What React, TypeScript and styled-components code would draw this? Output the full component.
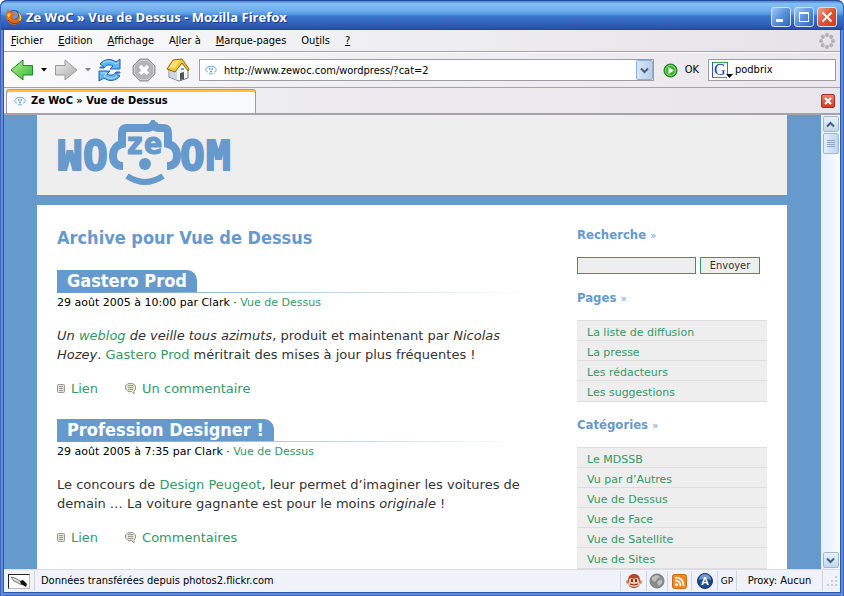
import React from "react";
import styled, { createGlobalStyle } from "styled-components";

const blue = "#6699cc";
const green = "#339966";
const uiFont = `"DejaVu Sans Condensed", "Noto Sans", sans-serif`;
const pageFont = `"DejaVu Sans", sans-serif`;

const Global = createGlobalStyle`
  * { box-sizing: border-box; }
  html, body { margin: 0; background: #fff; }
  button, input { font: inherit; margin: 0; padding: 0; color: inherit; }
  button { border: 0; background: none; display: flex; align-items: center; justify-content: center; }
  ul { list-style: none; margin: 0; padding: 0; }
  h1, h2, h3, p { margin: 0; }
  svg { display: block; flex: none; }
`;

const Window = styled.div`
  display: flex;
  flex-direction: column;
  height: 100vh;
  overflow: hidden;
  padding: 0 4px 4px;
  border-radius: 7px 7px 0 0;
  background: #2c54b0;
  box-shadow: inset 1px 0 #3f62b8, inset 3px 0 #5f8fdc, inset -1px 0 #3f62b8, inset -3px 0 #5f8fdc,
    inset 0 -1px #3f62b8, inset 0 -3px #5f8fdc;
  font: 11px/14px ${uiFont};
  color: #000;
`;

const TitleBar = styled.header`
  display: flex;
  align-items: center;
  gap: 4px;
  flex: none;
  height: 30px;
  margin: 0 -4px;
  padding: 3px 7px 0 6px;
  border-radius: 7px 7px 0 0;
  border-top: 1px solid #2a4b9a;
  background: linear-gradient(#4a86d8, #86c0f4 10%, #6cacec 35%, #5595e0 46%, #3c76cd 52%, #3263bd 75%, #2b52ac 93%, #23449a);
  box-shadow: inset 1px 0 #3a5fb5, inset -1px 0 #3a5fb5;
`;

const Title = styled.h1`
  flex: 1;
  font: bold 13px/18px "Open Sans", "Noto Sans", sans-serif;
  color: #fff;
  text-shadow: 1px 1px #1c3a86;
  white-space: nowrap;
`;

const WindowButtons = styled.div`
  display: flex;
  gap: 3px;
`;

const WindowButton = styled.button<{ $close?: boolean }>`
  width: 20px;
  height: 20px;
  border: 1px solid #cfe0fa;
  border-radius: 3px;
  background: ${(p) =>
    p.$close
      ? "linear-gradient(135deg, #f0a18c, #dc5334 50%, #c93d1c)"
      : "linear-gradient(135deg, #a5c8f4, #5a90dc 50%, #2f62b8)"};
`;

const MenuBar = styled.nav`
  display: flex;
  align-items: center;
  justify-content: space-between;
  flex: none;
  height: 22px;
  padding: 0 5px 0 7px;
  border-bottom: 1px solid #a5a3a8;
  background: linear-gradient(90deg, #fbfbfc, #f0eff2 40%, #e5e3e9);
`;

const MenuList = styled.ul`
  display: flex;
  gap: 15px;
`;

const MenuItem = styled.button`
  white-space: nowrap;
  display: block;
`;

const Toolbar = styled.div`
  display: flex;
  align-items: center;
  flex: none;
  height: 36px;
  padding: 0 4px 0 6px;
  border-top: 1px solid #fff;
  border-bottom: 1px solid #a5a3a8;
  background: linear-gradient(90deg, #fbfbfc, #f0eff2 40%, #eae8ed);
`;

const ToolButton = styled.button<{ $width: number; $after?: number }>`
  width: ${(p) => p.$width}px;
  height: 26px;
  margin-right: ${(p) => p.$after ?? 0}px;
`;

const AddressBox = styled.div`
  display: flex;
  align-items: center;
  flex: 1;
  height: 22px;
  border: 1px solid #9d9ca4;
  background: #fff;
  padding-left: 5px;
`;

const AddressInput = styled.input`
  flex: 1;
  min-width: 0;
  height: 18px;
  margin-left: 7px;
  border: 0;
  outline: 0;
  background: none;
`;

const DropButton = styled.button`
  width: 17px;
  height: 20px;
  border: 1px solid #8fb0d4;
  border-radius: 2px;
  background: linear-gradient(90deg, #d8e6f6, #b9cfe9);
`;

const GoButton = styled.button`
  gap: 7px;
  margin: 0 9px;
`;

const SearchBox = styled.div`
  display: flex;
  align-items: center;
  width: 128px;
  height: 22px;
  padding-left: 3px;
  border: 1px solid #9d9ca4;
  background: #fff;
`;

const SearchInput = styled.input`
  flex: 1;
  min-width: 0;
  margin-left: 2px;
  border: 0;
  outline: 0;
`;

const TabStrip = styled.div`
  display: flex;
  align-items: center;
  justify-content: space-between;
  flex: none;
  height: 27px;
  padding: 1px 5px 0 2px;
  border-bottom: 2px solid #a5a3a8;
  background: linear-gradient(90deg, #efeef1, #e8e6ec);
`;

const Tab = styled.button`
  justify-content: flex-start;
  gap: 5px;
  width: 250px;
  height: 24px;
  padding: 0 7px;
  border: solid #9d9ca4;
  border-width: 0 1px;
  border-radius: 3px 3px 0 0;
  background: #f8fafe;
  box-shadow: inset 0 1px #e8951e, inset 0 3px #ffc040;
  font-weight: bold;
  color: #000;
`;

const CloseTab = styled.button`
  width: 14px;
  height: 14px;
  border: 1px solid #a82a20;
  border-radius: 2px;
  background: linear-gradient(#ec8070, #d03a26);
`;

const Viewport = styled.div`
  display: flex;
  flex: 1;
  min-height: 0;
  background: ${blue};
`;

const Page = styled.div`
  flex: 1;
  min-width: 0;
  overflow: hidden;
  font-family: ${pageFont};
`;

const Sheet = styled.div`
  width: 100%;
  max-width: 750px;
  margin: 0 auto;
`;

const Masthead = styled.header`
  height: 80px;
  padding: 5px 20px;
  background: #eee;
`;

const Columns = styled.div`
  display: grid;
  grid-template-columns: minmax(0, 1fr) 190px;
  column-gap: 47px;
  margin-top: 10px;
  padding: 20px;
  background: #fff;
`;

const ArchiveTitle = styled.h2`
  margin-bottom: 19px;
  font: bold 18px/26px ${uiFont};
  color: ${blue};
`;

const Entry = styled.article`
  margin-bottom: 21px;
`;

const EntryHead = styled.div`
  padding-bottom: 1px;
  background: linear-gradient(90deg, ${blue}, #fff) bottom / 100% 1px no-repeat;
`;

const EntryTitle = styled.h3`
  width: fit-content;
  padding: 0 10px;
  border-radius: 0 10px 0 0;
  background: ${blue};
  font: bold 18px/22px ${uiFont};
  color: #fff;
`;

const Meta = styled.p`
  padding-top: 2px;
  font-size: 11px;
  line-height: 15px;
  color: #000;
`;

const Link = styled.a`
  color: ${green};
  text-decoration: none;
`;

const Body = styled.p`
  margin: 16px 0 15px;
  font-size: 13px;
  line-height: 19px;
  color: #333;
`;

const EntryLinks = styled.div`
  display: flex;
  gap: 27px;
  font-size: 13px;
  line-height: 19px;
`;

const IconLink = styled(Link)`
  display: flex;
  align-items: center;
  gap: 5px;
`;

const SideTitle = styled.h3`
  margin-bottom: 12px;
  font: bold 13px/20px ${uiFont};
  color: ${blue};
`;

const Raquo = styled.span`
  font-size: 11px;
  line-height: 1;
  font-weight: normal;
`;

const SearchForm = styled.form`
  display: flex;
  gap: 4px;
  margin-bottom: 14px;
`;

const SiteInput = styled.input`
  width: 119px;
  height: 17px;
  border: 1px solid ${green};
  background: #eee;
`;

const SubmitButton = styled.button`
  width: 60px;
  height: 17px;
  border: 1px solid ${green};
  background: #eee;
  font: 11px/14px ${uiFont};
  color: #333;
`;

const SideList = styled.ul`
  margin-bottom: 13px;
  padding-bottom: 1px;
  border-bottom: 1px solid #ddd;
  background: #eee;
`;

const SideItem = styled.li`
  padding: 5px 10px 0;
  border-top: 1px solid #ddd;
  font-size: 11px;
  line-height: 14px;
`;

const ScrollBar = styled.div`
  display: flex;
  flex-direction: column;
  align-items: center;
  width: 20px;
  padding: 1px 0;
  border-left: 1px solid ${blue};
  background: linear-gradient(90deg, #e4eefc, #fafcff);
`;

const ScrollButton = styled.button`
  width: 16px;
  height: 16px;
  border: 1px solid #9db8d8;
  border-radius: 2px;
  background: linear-gradient(#e8f1fb, #c3d6ec);
`;

const ScrollThumb = styled(ScrollButton)`
  height: 21px;
  margin: 1px 0 auto;
  background: linear-gradient(90deg, #e4effb, #bfd4ee);
`;

const StatusBar = styled.footer`
  display: flex;
  align-items: center;
  flex: none;
  height: 23px;
  padding-left: 4px;
  border-top: 1px solid #dcdde2;
  background: #eff3f9;
`;

const StatusText = styled.div`
  flex: 1;
  height: 20px;
  padding-left: 6px;
  border-left: 1px solid #d2d4da;
  line-height: 19px;
  white-space: nowrap;
`;

const StatusCell = styled.div<{ $width: number }>`
  display: flex;
  align-items: center;
  justify-content: center;
  width: ${(p) => p.$width}px;
  height: 20px;
  border-left: 1px solid #d2d4da;
  white-space: nowrap;
`;

const EditorBox = styled.div`
  display: flex;
  align-items: center;
  justify-content: center;
  width: 22px;
  height: 15px;
  margin-right: 4px;
  border: 1px solid;
  border-color: #222 #bbb #bbb #222;
  background: #fff;
`;

const Abbreviation = styled.span`
  font: 9px/12px "DejaVu Sans", sans-serif;
`;

const FirefoxIcon = () => (
  <svg width="16" height="16" viewBox="0 0 16 16" aria-hidden="true">
    <circle cx="8" cy="8" r="7" fill="#2b4f9e" />
    <circle cx="8" cy="6" r="4" fill="#5f9be0" />
    <path d="M1 3C1 1 2 0 3 1L5 3C8 3 9 4 9 6L7 7C7 10 9 11 11 10C13 9 13 6 12 3C15 5 16 8 15 11C13 15 9 17 5 15C1 13 0 9 0 7Z" fill="#e06c1a" />
    <path d="M12 3C15 5 16 8 15 11L13 12C14 8 14 6 12 3ZM1 6L3 4L5 5L3 8L4 11Z" fill="#ffc838" />
    <path d="M2 11C5 15 11 16 14 12" fill="none" stroke="#8c3212" />
  </svg>
);

const FaceIcon = () => (
  <svg width="12" height="10" viewBox="0 0 12 10" aria-hidden="true">
    <g fill="none" stroke="#7fa9d3">
      <path d="M3 7C0 7 0 2.5 3 2.5L3 1.5H9V2.5C12 2.5 12 7 9 7" />
      <path d="M4 8.5Q6 9.5 8 8.5" />
      <path d="M4 4H5.5M6.5 4H8" strokeWidth="2" />
    </g>
    <circle cx="6" cy="6.5" r="1" fill={blue} />
  </svg>
);

const ArrowIcon = ({ back }: { back?: boolean }) => (
  <svg width="24" height="24" viewBox="0 0 24 24" aria-hidden="true">
    <defs>
      <linearGradient id={back ? "arrowBack" : "arrowNext"} x1="0" y1="0" x2="1" y2="1">
        <stop offset="0" stopColor={back ? "#b9f29a" : "#eeeeee"} />
        <stop offset="1" stopColor={back ? "#2cb52c" : "#aaaaaa"} />
      </linearGradient>
    </defs>
    <path
      d={back ? "M1 12L13 2V7.5H22.5V17H13V22Z" : "M23 12L11 2V7.5H1.5V17H11V22Z"}
      fill={`url(#${back ? "arrowBack" : "arrowNext"})`}
      stroke={back ? "#1d8a24" : "#999"}
      strokeLinejoin="round"
    />
  </svg>
);

const Caret = ({ color }: { color: string }) => (
  <svg width="6" height="4" viewBox="0 0 6 4" aria-hidden="true">
    <path d="M0 0H6L3 3.5Z" fill={color} />
  </svg>
);

const ReloadIcon = () => (
  <svg width="24" height="24" viewBox="0 0 24 24" aria-hidden="true">
    <g fill="#5fb4f2" stroke="#1c62b8" strokeLinejoin="round">
      <path d="M2 9L6 9L2 6C6 1 13 0 18 4L22 1V11H12L15 8C11 6 8 7 6 10H2Z" />
      <path d="M22 15L18 15L22 18C18 23 11 24 6 20L1 23V13H12L9 16C13 18 16 17 18 14H22Z" />
    </g>
    <path d="M5 5C9 2 13 3 18 6L21 4M3 15H9L6 18C10 21 16 21 19 18" fill="none" stroke="#b7e2fd" />
  </svg>
);

const StopIcon = () => (
  <svg width="24" height="24" viewBox="0 0 24 24" aria-hidden="true">
    <path d="M8 1H16L23 8V16L16 23H8L1 16V8Z" fill="#b4b4b4" stroke="#909090" />
    <path d="M8 2.5H16L21.5 8V16L16 21.5H8L2.5 16V8Z" fill="none" stroke="#d0d0d0" />
    <path d="M8 8L16 16M16 8L8 16" stroke="#fff" strokeWidth="3.5" />
  </svg>
);

const HomeIcon = () => (
  <svg width="24" height="24" viewBox="0 0 24 24" aria-hidden="true">
    <path d="M3 12L8 14L16 5L22 12V20L13 23L3 19Z" fill="#f6f6f4" stroke="#75787e" />
    <path d="M3.5 12L11 13V22L3.5 19Z" fill="#cdd6e4" />
    <path d="M7 2L16 1L23 11L22 13L16 5L9 14L1 11Z" fill="#f3c63c" stroke="#8a6818" strokeLinejoin="round" />
    <path d="M7 3L14 2L9 10L3 10Z" fill="#fbdf74" />
    <path d="M14 15L18 14V21L14 22Z" fill="#50545c" />
    <path d="M15 10H18V12H15Z" fill="#58a8e4" />
  </svg>
);

const GoIcon = () => (
  <svg width="15" height="15" viewBox="0 0 15 15" aria-hidden="true">
    <circle cx="7.5" cy="7.5" r="6.5" fill="#39b32c" stroke="#14741a" />
    <circle cx="7.5" cy="7.5" r="5" fill="none" stroke="#8fe07c" />
    <path d="M5.5 4L11 7.5L5.5 11Z" fill="#fff" />
  </svg>
);

const GoogleIcon = () => (
  <svg width="21" height="17" viewBox="0 0 21 17" aria-hidden="true">
    <path d="M1 .5H15" stroke="#2fae3b" />
    <path d="M.5 0V16" stroke="#2b55c9" />
    <path d="M0 15.5H15" stroke="#2fae3b" />
    <path d="M15.5 0V12" stroke="#d83a2e" />
    <text x="2" y="13" fontFamily="Liberation Serif, serif" fontSize="16" fill="#1736b0">G</text>
    <path d="M14 12H21L17.5 16Z" fill="#000" />
  </svg>
);

const Throbber = () => (
  <svg width="16" height="16" viewBox="0 0 16 16" aria-hidden="true">
    <g fill="#b3b1b5">
      {[0, 45, 90, 135, 180, 225, 270, 315].map((a) => (
        <circle key={a} cx="8" cy="2" r="2" transform={`rotate(${a} 8 8)`} />
      ))}
    </g>
  </svg>
);

const Chevron = ({ up }: { up?: boolean }) => (
  <svg width="9" height="7" viewBox="0 0 9 7" aria-hidden="true">
    <path d={up ? "M1 5.5L4.5 2L8 5.5" : "M1 1.5L4.5 5L8 1.5"} fill="none" stroke="#4a5f80" strokeWidth="2" />
  </svg>
);

const CrossIcon = ({ size, weight }: { size: number; weight: number }) => (
  <svg width={size} height={size} viewBox="0 0 12 12" aria-hidden="true">
    <path d="M1.5 1.5L10.5 10.5M10.5 1.5L1.5 10.5" stroke="#fff" strokeWidth={weight} />
  </svg>
);

const SiteLogo = () => (
  <svg width="176" height="68" viewBox="0 0 176 68" role="img" aria-label="WoC ze doM">
    <g fill={blue} stroke={blue} strokeWidth="2" fontWeight="bold" fontFamily="DejaVu Sans Mono, monospace" fontSize="41">
      <text x="1" y="50" transform="rotate(180 13 35)">M</text>
      <text x="26" y="50">O</text>
      <text x="123" y="50">O</text>
      <text x="149" y="50">M</text>
    </g>
    <path
      d="M66 46C59 46 56 42 56 36C56 29 60 25 65 24V13Q65 8 70 8H90Q94 8 96 5Q98 8 102 8H106Q111 8 111 13V24C116 25 120 29 120 36C120 42 117 46 110 46"
      fill="none"
      stroke={blue}
      strokeWidth="8"
    />
    <path d="M92 5L94 2H100L102 5Z" fill={blue} />
    <g fill={blue} stroke={blue} fontWeight="bold" fontFamily="DejaVu Sans Condensed, sans-serif" fontSize="30">
      <text x="70" y="34">z</text>
      <text x="87" y="34">e</text>
    </g>
    <circle cx="88" cy="44" r="6" fill={blue} />
    <path d="M70 56Q88 68 106 56" fill="none" stroke={blue} strokeWidth="6" />
  </svg>
);

const PageIcon = () => (
  <svg width="9" height="10" viewBox="0 0 9 10" aria-hidden="true">
    <rect x=".5" y=".5" width="7" height="8" rx="1" fill="#e6e6d0" stroke="#999" />
    <path d="M2 2.5H6M2 4.5H6M2 6.5H6" stroke="#999" />
  </svg>
);

const CommentIcon = () => (
  <svg width="12" height="12" viewBox="0 0 12 12" aria-hidden="true">
    <path d="M3 .5H8L10.5 3V6L9 8.5V11L6.5 8.5H3L.5 6V3Z" fill="#e6e6d0" stroke="#999" />
    <path d="M3 2.5H8M3 4.5H8M3 6.5H8" stroke="#999" />
  </svg>
);

const PenIcon = () => (
  <svg width="20" height="13" viewBox="0 0 20 13" aria-hidden="true">
    <path d="M2 2L6 3L14 8L13 10L5 6Z" fill="#ddd" stroke="#777" />
    <path d="M11 6L14 5L18 9L17 12L12 9Z" fill="#111" />
  </svg>
);

const MonkeyIcon = () => (
  <svg width="16" height="16" viewBox="0 0 16 16" aria-hidden="true">
    <circle cx="2" cy="9" r="2" fill="#d9845f" />
    <circle cx="14" cy="9" r="2" fill="#d9845f" />
    <path d="M2 8C2 3 4 1 8 1C12 1 14 3 14 8C14 13 12 15 8 15C4 15 2 13 2 8Z" fill="#b04a2c" />
    <path d="M3 8C3 5 5 4 8 6C11 4 13 5 13 8L14 11C12 15 4 15 2 11Z" fill="#f5c3a6" />
    <path d="M6 6V9M10 6V9" fill="none" stroke="#3a1410" strokeWidth="1.5" />
    <path d="M4 11Q8 13 12 11" fill="none" stroke="#7a1f14" />
  </svg>
);

const GlobeIcon = () => (
  <svg width="16" height="16" viewBox="0 0 16 16" aria-hidden="true">
    <circle cx="8" cy="8" r="7" fill="#8c8c8c" stroke="#777" />
    <path d="M3 4L8 2L11 4L8 6L6 9L3 7ZM9 8L13 6L13 10L10 13L8 10Z" fill="#bdbdbd" />
  </svg>
);

const FeedIcon = () => (
  <svg width="15" height="15" viewBox="0 0 15 15" aria-hidden="true">
    <rect x=".5" y=".5" width="14" height="14" rx="2" fill="#f08a24" stroke="#c96a10" />
    <circle cx="4.5" cy="10.5" r="1.5" fill="#fff" />
    <path d="M3 6.5Q8.5 6.5 8.5 12M3 3.5Q11.5 3.5 11.5 12" fill="none" stroke="#fff" strokeWidth="1.7" />
  </svg>
);

const BallIcon = () => (
  <svg width="16" height="16" viewBox="0 0 16 16" aria-hidden="true">
    <circle cx="8" cy="8" r="7.5" fill="#1f4a8c" stroke="#173663" />
    <path d="M2 7A6 6 0 0 1 14 7Q8 4 2 7Z" fill="#6f9bd4" />
    <text x="8" y="12" textAnchor="middle" fontFamily="Liberation Sans, sans-serif" fontWeight="bold" fontSize="11" fill="#fff">A</text>
  </svg>
);

const GripIcon = () => (
  <svg width="12" height="12" viewBox="0 0 12 12" aria-hidden="true">
    <path d="M9 1h2v2h-2zM9 5h2v2h-2zM9 9h2v2h-2zM5 5h2v2h-2zM5 9h2v2h-2zM1 9h2v2h-2z" fill="#c9ccd2" />
  </svg>
);

const menus: [string, string, string][] = [
  ["", "F", "ichier"],
  ["", "E", "dition"],
  ["", "A", "ffichage"],
  ["A", "l", "ler à"],
  ["", "M", "arque-pages"],
  ["Ou", "t", "ils"],
  ["", "?", ""],
];

const pages = ["La liste de diffusion", "La presse", "Les rédacteurs", "Les suggestions"];
const categories = ["Le MDSSB", "Vu par d’Autres", "Vue de Dessus", "Vue de Face", "Vue de Satellite", "Vue de Sites"];

type PostProps = { title: string; time: string; comments: string; children: React.ReactNode };

const Post = ({ title, time, comments, children }: PostProps) => (
  <Entry>
    <EntryHead>
      <EntryTitle>{title}</EntryTitle>
    </EntryHead>
    <Meta>
      29 août 2005 à {time} par Clark · <Link href="#vue-de-dessus">Vue de Dessus</Link>
    </Meta>
    <Body>{children}</Body>
    <EntryLinks>
      <IconLink href="#lien"><PageIcon />Lien</IconLink>
      <IconLink href="#commentaires"><CommentIcon />{comments}</IconLink>
    </EntryLinks>
  </Entry>
);

const LinkBlock = ({ title, items }: { title: string; items: string[] }) => (
  <section>
    <SideTitle>{title} <Raquo>»</Raquo></SideTitle>
    <SideList>
      {items.map((item) => (
        <SideItem key={item}><Link href="#page">{item}</Link></SideItem>
      ))}
    </SideList>
  </section>
);

export default function App() {
  return (
    <>
      <Global />
      <Window>
        <TitleBar>
          <FirefoxIcon />
          <Title>Ze WoC » Vue de Dessus - Mozilla Firefox</Title>
          <WindowButtons>
            <WindowButton aria-label="Réduire">
              <svg width="12" height="12" viewBox="0 0 12 12"><path d="M1 9.5H8" stroke="#fff" strokeWidth="3" /></svg>
            </WindowButton>
            <WindowButton aria-label="Agrandir">
              <svg width="12" height="12" viewBox="0 0 12 12"><path d="M1 1.5H11M1.5 1V11M10.5 1V11M1 10.5H11M1 2.5H11" stroke="#fff" /></svg>
            </WindowButton>
            <WindowButton $close aria-label="Fermer"><CrossIcon size={12} weight={2} /></WindowButton>
          </WindowButtons>
        </TitleBar>
        <MenuBar>
          <MenuList>
            {menus.map(([before, key, after]) => (
              <li key={key}><MenuItem>{before}<u>{key}</u>{after}</MenuItem></li>
            ))}
          </MenuList>
          <Throbber />
        </MenuBar>
        <Toolbar>
          <ToolButton $width={24} $after={4} aria-label="Précédent"><ArrowIcon back /></ToolButton>
          <ToolButton $width={12} $after={4} aria-label="Historique précédent"><Caret color="#000" /></ToolButton>
          <ToolButton $width={24} $after={4} aria-label="Suivant"><ArrowIcon /></ToolButton>
          <ToolButton $width={12} $after={4} aria-label="Historique suivant"><Caret color="#888" /></ToolButton>
          <ToolButton $width={24} $after={10} aria-label="Actualiser"><ReloadIcon /></ToolButton>
          <ToolButton $width={24} $after={10} aria-label="Arrêter"><StopIcon /></ToolButton>
          <ToolButton $width={24} $after={9} aria-label="Accueil"><HomeIcon /></ToolButton>
          <AddressBox>
            <FaceIcon />
            <AddressInput aria-label="Adresse" defaultValue="http://www.zewoc.com/wordpress/?cat=2" />
            <DropButton aria-label="Adresses récentes"><Chevron /></DropButton>
          </AddressBox>
          <GoButton><GoIcon />OK</GoButton>
          <SearchBox>
            <GoogleIcon />
            <SearchInput aria-label="Recherche Google" defaultValue="podbrix" />
          </SearchBox>
        </Toolbar>
        <TabStrip>
          <Tab><FaceIcon />Ze WoC » Vue de Dessus</Tab>
          <CloseTab aria-label="Fermer l’onglet"><CrossIcon size={8} weight={3} /></CloseTab>
        </TabStrip>
        <Viewport>
          <Page>
            <Sheet>
              <Masthead><SiteLogo /></Masthead>
              <Columns>
                <main>
                  <ArchiveTitle>Archive pour Vue de Dessus</ArchiveTitle>
                  <Post title="Gastero Prod" time="10:00" comments="Un commentaire">
                    <em>Un </em>
                    <Link href="#weblog"><em>weblog</em></Link>
                    <em> de veille tous azimuts</em>, produit et maintenant par <em>Nicolas Hozey</em>.{" "}
                    <Link href="#gastero">Gastero Prod</Link> méritrait des mises à jour plus fréquentes !
                  </Post>
                  <Post title="Profession Designer !" time="7:35" comments="Commentaires">
                    Le concours de <Link href="#peugeot">Design Peugeot</Link>, leur permet d’imaginer les voitures de
                    demain … La voiture gagnante est pour le moins <em>originale</em> !
                  </Post>
                </main>
                <aside>
                  <SideTitle>Recherche <Raquo>»</Raquo></SideTitle>
                  <SearchForm onSubmit={(e) => e.preventDefault()}>
                    <SiteInput aria-label="Recherche" />
                    <SubmitButton>Envoyer</SubmitButton>
                  </SearchForm>
                  <LinkBlock title="Pages" items={pages} />
                  <LinkBlock title="Catégories" items={categories} />
                </aside>
              </Columns>
            </Sheet>
          </Page>
          <ScrollBar>
            <ScrollButton aria-label="Monter"><Chevron up /></ScrollButton>
            <ScrollThumb aria-label="Position">
              <svg width="8" height="8" viewBox="0 0 8 8"><path d="M0 .5H8M0 2.5H8M0 4.5H8M0 6.5H8" stroke="#8aa6cc" /></svg>
            </ScrollThumb>
            <ScrollButton aria-label="Descendre"><Chevron /></ScrollButton>
          </ScrollBar>
        </Viewport>
        <StatusBar>
          <EditorBox><PenIcon /></EditorBox>
          <StatusText>Données transférées depuis photos2.flickr.com</StatusText>
          <StatusCell $width={26}><MonkeyIcon /></StatusCell>
          <StatusCell $width={21}><GlobeIcon /></StatusCell>
          <StatusCell $width={24}><FeedIcon /></StatusCell>
          <StatusCell $width={26}><BallIcon /></StatusCell>
          <StatusCell $width={19}><Abbreviation>GP</Abbreviation></StatusCell>
          <StatusCell $width={86}>Proxy: Aucun</StatusCell>
          <StatusCell $width={18}><GripIcon /></StatusCell>
        </StatusBar>
      </Window>
    </>
  );
}
